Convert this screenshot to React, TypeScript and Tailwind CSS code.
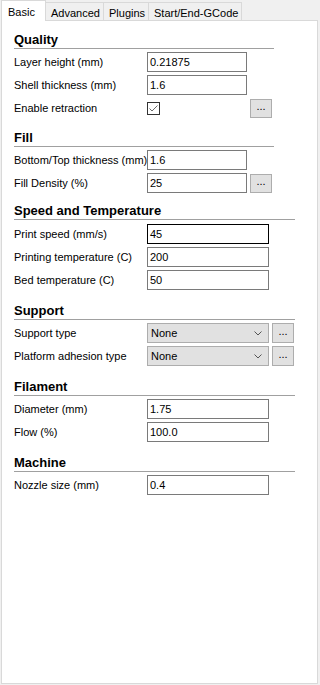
import { ReactNode } from "react";

type Row = {
  label: string;
  kind: "input" | "check" | "select";
  value?: string;
  wide?: boolean;
  focused?: boolean;
  more?: boolean;
};

type Section = {
  title: string;
  top: string;
  line: string;
  rows: Row[];
};

const sections: Section[] = [
  {
    title: "Quality", top: "mt-[11px]", line: "w-[260px]",
    rows: [
      { label: "Layer height (mm)", kind: "input", value: "0.21875" },
      { label: "Shell thickness (mm)", kind: "input", value: "1.6" },
      { label: "Enable retraction", kind: "check", more: true },
    ],
  },
  {
    title: "Fill", top: "mt-[12px]", line: "w-[260px]",
    rows: [
      { label: "Bottom/Top thickness (mm)", kind: "input", value: "1.6" },
      { label: "Fill Density (%)", kind: "input", value: "25", more: true },
    ],
  },
  {
    title: "Speed and Temperature", top: "mt-[10px]", line: "w-[281px]",
    rows: [
      { label: "Print speed (mm/s)", kind: "input", value: "45", wide: true, focused: true },
      { label: "Printing temperature (C)", kind: "input", value: "200", wide: true },
      { label: "Bed temperature (C)", kind: "input", value: "50", wide: true },
    ],
  },
  {
    title: "Support", top: "mt-[13px]", line: "w-[281px]",
    rows: [
      { label: "Support type", kind: "select", value: "None", more: true },
      { label: "Platform adhesion type", kind: "select", value: "None", more: true },
    ],
  },
  {
    title: "Filament", top: "mt-[13px]", line: "w-[281px]",
    rows: [
      { label: "Diameter (mm)", kind: "input", value: "1.75", wide: true },
      { label: "Flow (%)", kind: "input", value: "100.0", wide: true },
    ],
  },
  {
    title: "Machine", top: "mt-[13px]", line: "w-[281px]",
    rows: [
      { label: "Nozzle size (mm)", kind: "input", value: "0.4", wide: true },
    ],
  },
];

function MoreButton({ tall }: { tall?: boolean }) {
  return (
    <div className={`${tall ? "h-[20px] w-[22px]" : "h-[19px] w-[22px]"} ml-[3px] flex items-center justify-center border border-[#adadad] bg-[#e1e1e1] text-[11px] leading-none pb-[3px]`}>
      ...
    </div>
  );
}

function Field({ row }: { row: Row }) {
  let control: ReactNode = null;
  if (row.kind === "input") {
    control = (
      <div className={`${row.wide ? "w-[122px]" : "w-[100px]"} h-[20px] flex items-center border ${row.focused ? "border-[#000000]" : "border-[#7a7a7a]"} bg-white pl-[2px]`}>
        {row.value}
      </div>
    );
  } else if (row.kind === "check") {
    control = (
      <div className="w-[100px] h-[20px] flex items-center">
        <div className="w-[13px] h-[13px] border border-[#333333] bg-white flex items-center justify-center">
          <svg width="11" height="11" viewBox="0 0 11 11">
            <polyline points="1.5,5.5 4,8 9.5,2.5" fill="none" stroke="#6b6b6b" strokeWidth="1" />
          </svg>
        </div>
      </div>
    );
  } else {
    control = (
      <div className="w-[122px] h-[20px] flex items-center justify-between border border-[#adadad] bg-[#e1e1e1] pl-[3px] pr-[6px]">
        <span>{row.value}</span>
        <svg width="8" height="5" viewBox="0 0 8 5">
          <polyline points="0.5,0.5 4,4 7.5,0.5" fill="none" stroke="#555555" strokeWidth="1" />
        </svg>
      </div>
    );
  }

  return (
    <div className="flex items-center h-[20px]">
      <div className="w-[133px] whitespace-nowrap">{row.label}</div>
      {control}
      {row.more && <MoreButton tall={row.kind === "select"} />}
    </div>
  );
}

export default function App() {
  const tabs = ["Advanced", "Plugins", "Start/End-GCode"];
  const tabWidths = ["w-[59px]", "w-[46px]", "w-[94px]"];

  return (
    <div className="w-[320px] h-[685px] bg-[#f0f0f0] text-[11px] text-black font-['Liberation_Sans',Arial,sans-serif] overflow-hidden">
      <div className="flex items-end h-[20px] pl-[1px]">
        <div className="relative z-10 w-[45px] h-[21px] -mb-[1px] bg-white border border-b-0 border-[#d9d9d9] pl-[6px] pt-[3px]">
          Basic
        </div>
        {tabs.map((t, i) => (
          <div key={t} className={`${tabWidths[i]} h-[18px] -ml-[1px] bg-[#f0f0f0] border border-b-0 border-[#d9d9d9] pl-[5px] pt-[2px] whitespace-nowrap`}>
            {t}
          </div>
        ))}
      </div>

      <div className="ml-[1px] w-[317px] h-[664px] bg-white border border-[#d9d9d9] pl-[12px]">
        {sections.map((s) => (
          <div key={s.title} className={s.top}>
            <div className={`${s.line} h-[17px] border-b border-[#a0a0a0] font-bold text-[13px] leading-[16px]`}>
              {s.title}
            </div>
            <div className={`${s.title === "Speed and Temperature" ? "mt-[4px]" : "mt-[3px]"} flex flex-col gap-[3px]`}>
              {s.rows.map((r) => (
                <Field key={r.label} row={r} />
              ))}
            </div>
          </div>
        ))}
      </div>
    </div>
  );
}
